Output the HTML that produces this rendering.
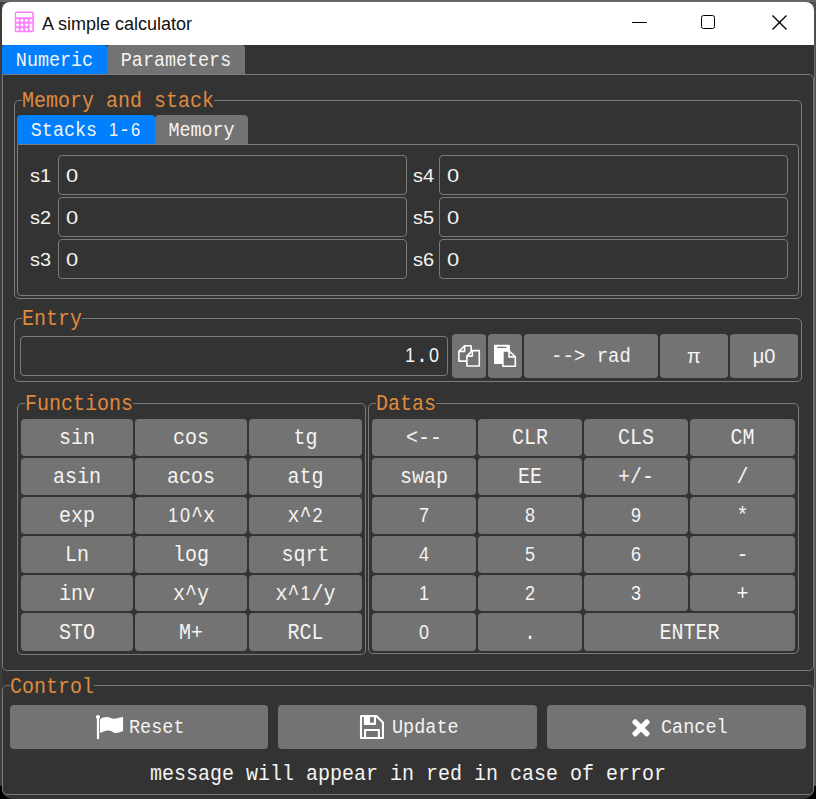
<!DOCTYPE html><html><head><meta charset="utf-8"><style>html,body{margin:0;padding:0;}body{width:816px;height:799px;position:relative;overflow:hidden;background:#4a4a4a;}</style></head><body>
<div style="position:absolute;left:0px;top:0px;width:2px;height:799px;background:#3c3c3c;"></div>
<div style="position:absolute;left:814px;top:0px;width:2px;height:799px;background:#4a5058;"></div>
<div style="position:absolute;left:814px;top:45px;width:1px;height:741px;background:#6a6a6a;"></div>
<div style="position:absolute;left:0px;top:0px;width:816px;height:2px;background:#6a6560;"></div>
<div style="position:absolute;left:0px;top:786px;width:14px;height:13px;background:#000;"></div>
<div style="position:absolute;left:802px;top:786px;width:14px;height:13px;background:#000;"></div>
<div style="position:absolute;left:2px;top:2px;width:812px;height:797px;background:#333333;border-radius:8px 8px 10px 10px;"></div>
<div style="position:absolute;left:2px;top:2px;width:812px;height:43px;background:#ffffff;border-radius:8px 8px 0 0;"></div>
<svg style="position:absolute;left:10px;top:8px" width="30" height="28" viewBox="10 8 30 28">
<path fill="#ff80ff" fill-rule="evenodd" d="M16.3 11.5 H32.4 Q33.9 11.5 33.9 13 V30.8 Q33.9 32.3 32.4 32.3 H16.3 Q14.8 32.3 14.8 30.8 V13 Q14.8 11.5 16.3 11.5 Z
M16.1 13 V17.2 H32.2 V13 Z
M17.5 19 a1.5 1.5 0 1 0 0.01 0 Z M21.9 19 a1.5 1.5 0 1 0 0.01 0 Z M26.5 19 a1.5 1.5 0 1 0 0.01 0 Z M31 19 a1.5 1.5 0 1 0 0.01 0 Z
M17.5 23.4 a1.5 1.5 0 1 0 0.01 0 Z M21.9 23.4 a1.5 1.5 0 1 0 0.01 0 Z M26.5 23.4 a1.5 1.5 0 1 0 0.01 0 Z
M17.5 28 a1.5 1.5 0 1 0 0.01 0 Z M21.9 28 a1.5 1.5 0 1 0 0.01 0 Z M26.5 28 a1.5 1.5 0 1 0 0.01 0 Z
M29.6 24.9 Q29.6 23.6 30.95 23.6 Q32.3 23.6 32.3 24.9 V29.5 Q32.3 30.8 30.95 30.8 Q29.6 30.8 29.6 29.5 Z"/>
</svg>
<div style="position:absolute;left:42.00px;top:13.91px;width:300px;height:20.11px;line-height:20.11px;font-family:'Liberation Sans', sans-serif;font-size:18.00px;color:#111111;text-align:left;white-space:pre;">A simple calculator</div>
<div style="position:absolute;left:632px;top:22px;width:15px;height:1.1999999999999993px;background:#000;"></div>
<div style="position:absolute;left:701px;top:15px;width:12.4px;height:12.4px;border:1.4px solid #000;border-radius:2.5px;"></div>
<svg style="position:absolute;left:771px;top:14px" width="17" height="17" viewBox="0 0 17 17"><path d="M1.5 1.5 L15.5 15.5 M15.5 1.5 L1.5 15.5" stroke="#000" stroke-width="1.35"/></svg>
<div style="position:absolute;left:2px;top:74px;width:810px;height:595px;border:1px solid #7a7a7a;border-radius:0 5px 5px 5px;"></div>
<div style="position:absolute;left:2px;top:45px;width:105px;height:29px;background:#007fff;border-radius:3px 3px 0 0;"></div>
<div style="position:absolute;left:107px;top:45px;width:138px;height:29px;background:#737373;border-radius:3px 3px 0 0;"></div>
<div style="position:absolute;left:1.50px;top:49.76px;width:105px;height:22.51px;line-height:22.51px;font-family:'Liberation Mono', monospace;font-size:19.87px;color:#f6f4f2;text-align:center;white-space:pre;transform:scaleX(0.9259);transform-origin:center top;">Numeric</div>
<div style="position:absolute;left:107.00px;top:49.76px;width:138px;height:22.51px;line-height:22.51px;font-family:'Liberation Mono', monospace;font-size:19.87px;color:#f6f4f2;text-align:center;white-space:pre;transform:scaleX(0.9259);transform-origin:center top;">Parameters</div>
<div style="position:absolute;left:14px;top:100px;width:786px;height:197px;border:1px solid #7a7a7a;border-radius:5px;"></div>
<div style="position:absolute;left:22px;top:99px;width:192px;height:3px;background:#333333;"></div>
<div style="position:absolute;left:22.00px;top:89.02px;width:400px;height:24.46px;line-height:24.46px;font-family:'Liberation Mono', monospace;font-size:21.60px;color:#e08a3e;text-align:left;white-space:pre;transform:scaleX(0.9259);transform-origin:left top;">Memory and stack</div>
<div style="position:absolute;left:17px;top:144px;width:780px;height:150px;border:1px solid #7a7a7a;border-radius:0 4px 4px 4px;"></div>
<div style="position:absolute;left:17px;top:115px;width:138px;height:29px;background:#007fff;border-radius:4px 4px 0 0;"></div>
<div style="position:absolute;left:155px;top:115px;width:93px;height:29px;background:#737373;border-radius:4px 4px 0 0;"></div>
<div style="position:absolute;left:17.00px;top:119.66px;width:138px;height:22.51px;line-height:22.51px;font-family:'Liberation Mono', monospace;font-size:19.87px;color:#f6f4f2;text-align:center;white-space:pre;transform:scaleX(0.9259);transform-origin:center top;">Stacks <span style="font-family:'Liberation Sans', sans-serif;font-size:17.88px;line-height:0;padding:0 0.990px;">1</span>-<span style="font-family:'Liberation Sans', sans-serif;font-size:17.88px;line-height:0;padding:0 0.990px;">6</span></div>
<div style="position:absolute;left:155.00px;top:119.66px;width:93px;height:22.51px;line-height:22.51px;font-family:'Liberation Mono', monospace;font-size:19.87px;color:#f6f4f2;text-align:center;white-space:pre;transform:scaleX(0.9259);transform-origin:center top;">Memory</div>
<div style="position:absolute;left:58px;top:155px;width:347px;height:38px;border:1px solid #7a7a7a;border-radius:4px;"></div>
<div style="position:absolute;left:439px;top:155px;width:347px;height:38px;border:1px solid #7a7a7a;border-radius:4px;"></div>
<div style="position:absolute;left:30.00px;top:164.81px;width:30px;height:21.22px;line-height:21.22px;font-family:'Liberation Sans', sans-serif;font-size:19.00px;color:#f6f4f2;text-align:left;white-space:pre;transform:scaleX(1.0500);transform-origin:left top;">s1</div>
<div style="position:absolute;left:412.50px;top:164.81px;width:30px;height:21.22px;line-height:21.22px;font-family:'Liberation Sans', sans-serif;font-size:19.00px;color:#f6f4f2;text-align:left;white-space:pre;transform:scaleX(1.0500);transform-origin:left top;">s4</div>
<div style="position:absolute;left:65.50px;top:164.81px;width:30px;height:21.22px;line-height:21.22px;font-family:'Liberation Sans', sans-serif;font-size:19.00px;color:#f6f4f2;text-align:left;white-space:pre;transform:scaleX(1.1500);transform-origin:left top;">0</div>
<div style="position:absolute;left:447.00px;top:164.81px;width:30px;height:21.22px;line-height:21.22px;font-family:'Liberation Sans', sans-serif;font-size:19.00px;color:#f6f4f2;text-align:left;white-space:pre;transform:scaleX(1.1500);transform-origin:left top;">0</div>
<div style="position:absolute;left:58px;top:197px;width:347px;height:38px;border:1px solid #7a7a7a;border-radius:4px;"></div>
<div style="position:absolute;left:439px;top:197px;width:347px;height:38px;border:1px solid #7a7a7a;border-radius:4px;"></div>
<div style="position:absolute;left:30.00px;top:206.81px;width:30px;height:21.22px;line-height:21.22px;font-family:'Liberation Sans', sans-serif;font-size:19.00px;color:#f6f4f2;text-align:left;white-space:pre;transform:scaleX(1.0500);transform-origin:left top;">s2</div>
<div style="position:absolute;left:412.50px;top:206.81px;width:30px;height:21.22px;line-height:21.22px;font-family:'Liberation Sans', sans-serif;font-size:19.00px;color:#f6f4f2;text-align:left;white-space:pre;transform:scaleX(1.0500);transform-origin:left top;">s5</div>
<div style="position:absolute;left:65.50px;top:206.81px;width:30px;height:21.22px;line-height:21.22px;font-family:'Liberation Sans', sans-serif;font-size:19.00px;color:#f6f4f2;text-align:left;white-space:pre;transform:scaleX(1.1500);transform-origin:left top;">0</div>
<div style="position:absolute;left:447.00px;top:206.81px;width:30px;height:21.22px;line-height:21.22px;font-family:'Liberation Sans', sans-serif;font-size:19.00px;color:#f6f4f2;text-align:left;white-space:pre;transform:scaleX(1.1500);transform-origin:left top;">0</div>
<div style="position:absolute;left:58px;top:239px;width:347px;height:38px;border:1px solid #7a7a7a;border-radius:4px;"></div>
<div style="position:absolute;left:439px;top:239px;width:347px;height:38px;border:1px solid #7a7a7a;border-radius:4px;"></div>
<div style="position:absolute;left:30.00px;top:248.81px;width:30px;height:21.22px;line-height:21.22px;font-family:'Liberation Sans', sans-serif;font-size:19.00px;color:#f6f4f2;text-align:left;white-space:pre;transform:scaleX(1.0500);transform-origin:left top;">s3</div>
<div style="position:absolute;left:412.50px;top:248.81px;width:30px;height:21.22px;line-height:21.22px;font-family:'Liberation Sans', sans-serif;font-size:19.00px;color:#f6f4f2;text-align:left;white-space:pre;transform:scaleX(1.0500);transform-origin:left top;">s6</div>
<div style="position:absolute;left:65.50px;top:248.81px;width:30px;height:21.22px;line-height:21.22px;font-family:'Liberation Sans', sans-serif;font-size:19.00px;color:#f6f4f2;text-align:left;white-space:pre;transform:scaleX(1.1500);transform-origin:left top;">0</div>
<div style="position:absolute;left:447.00px;top:248.81px;width:30px;height:21.22px;line-height:21.22px;font-family:'Liberation Sans', sans-serif;font-size:19.00px;color:#f6f4f2;text-align:left;white-space:pre;transform:scaleX(1.1500);transform-origin:left top;">0</div>
<div style="position:absolute;left:14px;top:318px;width:786px;height:62px;border:1px solid #7a7a7a;border-radius:5px;"></div>
<div style="position:absolute;left:22px;top:317px;width:60px;height:3px;background:#333333;"></div>
<div style="position:absolute;left:22.00px;top:307.22px;width:400px;height:24.46px;line-height:24.46px;font-family:'Liberation Mono', monospace;font-size:21.60px;color:#e08a3e;text-align:left;white-space:pre;transform:scaleX(0.9259);transform-origin:left top;">Entry</div>
<div style="position:absolute;left:20px;top:336px;width:426px;height:38px;border:1px solid #7a7a7a;border-radius:4px;"></div>
<div style="position:absolute;left:240.00px;top:344.02px;width:200px;height:24.46px;line-height:24.46px;font-family:'Liberation Mono', monospace;font-size:21.60px;color:#f6f4f2;text-align:right;white-space:pre;transform:scaleX(0.9259);transform-origin:right top;"><span style="font-family:'Liberation Sans', sans-serif;font-size:19.44px;line-height:0;padding:0 1.076px;">1</span>.<span style="font-family:'Liberation Sans', sans-serif;font-size:19.44px;line-height:0;padding:0 1.076px;">0</span></div>
<div style="position:absolute;left:452px;top:334px;width:34px;height:44px;background:#737373;border-radius:4px;"></div>
<div style="position:absolute;left:488px;top:334px;width:34px;height:44px;background:#737373;border-radius:4px;"></div>
<svg style="position:absolute;left:455px;top:342px" width="28" height="28" viewBox="0 0 28 28">
<path d="M3.9 9.4 L9.6 3.7 L16.1 3.7 L16.1 19.1 L3.9 19.1 Z" fill="none" stroke="#fff" stroke-width="1.6" stroke-linejoin="round"/>
<path d="M3.9 9.4 L9.6 9.4 L9.6 3.7" fill="none" stroke="#fff" stroke-width="1.6" stroke-linejoin="round"/>
<path d="M11.9 14.1 L17.3 8.6 L24.3 8.6 L24.3 24 L11.9 24 Z" fill="#737373" stroke="#fff" stroke-width="1.6" stroke-linejoin="round"/>
<path d="M11.9 14.1 L17.3 14.1 L17.3 8.6" fill="none" stroke="#fff" stroke-width="1.6" stroke-linejoin="round"/>
</svg>
<svg style="position:absolute;left:491px;top:342px" width="28" height="28" viewBox="0 0 28 28">
<rect x="3" y="2.8" width="15.9" height="19.1" rx="1" fill="#fff"/>
<rect x="6.1" y="4.8" width="9.5" height="1.3" rx="0.6" fill="#737373"/>
<path d="M11.9 8.9 L18 8.9 L24.3 14.9 L24.3 24.2 L11.9 24.2 Z" fill="#737373" stroke="#fff" stroke-width="1.6" stroke-linejoin="round"/>
<path d="M18 8.9 L18 14.9 L24.3 14.9" fill="none" stroke="#fff" stroke-width="1.6" stroke-linejoin="round"/>
</svg>
<div style="position:absolute;left:524px;top:334px;width:134px;height:44px;background:#737373;border-radius:4px;"></div>
<div style="position:absolute;left:524.00px;top:344.92px;width:134px;height:23.24px;line-height:23.24px;font-family:'Liberation Mono', monospace;font-size:20.52px;color:#f6f4f2;text-align:center;white-space:pre;transform:scaleX(0.9259);transform-origin:center top;">--&gt; rad</div>
<div style="position:absolute;left:660px;top:334px;width:68px;height:44px;background:#737373;border-radius:4px;"></div>
<div style="position:absolute;left:660.00px;top:345.35px;width:68px;height:22.65px;line-height:22.65px;font-family:'Liberation Sans', sans-serif;font-size:20.00px;color:#f6f4f2;text-align:center;white-space:pre;">π</div>
<div style="position:absolute;left:730px;top:334px;width:68px;height:44px;background:#737373;border-radius:4px;"></div>
<div style="position:absolute;left:730.00px;top:345.35px;width:68px;height:22.65px;line-height:22.65px;font-family:'Liberation Sans', sans-serif;font-size:20.00px;color:#f6f4f2;text-align:center;white-space:pre;">μ0</div>
<div style="position:absolute;left:17px;top:403px;width:347px;height:250px;border:1px solid #7a7a7a;border-radius:5px;"></div>
<div style="position:absolute;left:25px;top:402px;width:108px;height:3px;background:#333333;"></div>
<div style="position:absolute;left:25.00px;top:392.22px;width:400px;height:24.46px;line-height:24.46px;font-family:'Liberation Mono', monospace;font-size:21.60px;color:#e08a3e;text-align:left;white-space:pre;transform:scaleX(0.9259);transform-origin:left top;">Functions</div>
<div style="position:absolute;left:368px;top:403px;width:429px;height:249px;border:1px solid #7a7a7a;border-radius:5px;"></div>
<div style="position:absolute;left:376px;top:402px;width:60px;height:3px;background:#333333;"></div>
<div style="position:absolute;left:376.00px;top:392.22px;width:400px;height:24.46px;line-height:24.46px;font-family:'Liberation Mono', monospace;font-size:21.60px;color:#e08a3e;text-align:left;white-space:pre;transform:scaleX(0.9259);transform-origin:left top;">Datas</div>
<div style="position:absolute;left:21px;top:419px;width:112px;height:37px;background:#737373;border-radius:4px;"></div>
<div style="position:absolute;left:21.00px;top:426.02px;width:112px;height:24.46px;line-height:24.46px;font-family:'Liberation Mono', monospace;font-size:21.60px;color:#f6f4f2;text-align:center;white-space:pre;transform:scaleX(0.9259);transform-origin:center top;">sin</div>
<div style="position:absolute;left:135px;top:419px;width:112px;height:37px;background:#737373;border-radius:4px;"></div>
<div style="position:absolute;left:135.00px;top:426.02px;width:112px;height:24.46px;line-height:24.46px;font-family:'Liberation Mono', monospace;font-size:21.60px;color:#f6f4f2;text-align:center;white-space:pre;transform:scaleX(0.9259);transform-origin:center top;">cos</div>
<div style="position:absolute;left:249px;top:419px;width:113px;height:37px;background:#737373;border-radius:4px;"></div>
<div style="position:absolute;left:249.00px;top:426.02px;width:113px;height:24.46px;line-height:24.46px;font-family:'Liberation Mono', monospace;font-size:21.60px;color:#f6f4f2;text-align:center;white-space:pre;transform:scaleX(0.9259);transform-origin:center top;">tg</div>
<div style="position:absolute;left:21px;top:458px;width:112px;height:37px;background:#737373;border-radius:4px;"></div>
<div style="position:absolute;left:21.00px;top:465.02px;width:112px;height:24.46px;line-height:24.46px;font-family:'Liberation Mono', monospace;font-size:21.60px;color:#f6f4f2;text-align:center;white-space:pre;transform:scaleX(0.9259);transform-origin:center top;">asin</div>
<div style="position:absolute;left:135px;top:458px;width:112px;height:37px;background:#737373;border-radius:4px;"></div>
<div style="position:absolute;left:135.00px;top:465.02px;width:112px;height:24.46px;line-height:24.46px;font-family:'Liberation Mono', monospace;font-size:21.60px;color:#f6f4f2;text-align:center;white-space:pre;transform:scaleX(0.9259);transform-origin:center top;">acos</div>
<div style="position:absolute;left:249px;top:458px;width:113px;height:37px;background:#737373;border-radius:4px;"></div>
<div style="position:absolute;left:249.00px;top:465.02px;width:113px;height:24.46px;line-height:24.46px;font-family:'Liberation Mono', monospace;font-size:21.60px;color:#f6f4f2;text-align:center;white-space:pre;transform:scaleX(0.9259);transform-origin:center top;">atg</div>
<div style="position:absolute;left:21px;top:497px;width:112px;height:37px;background:#737373;border-radius:4px;"></div>
<div style="position:absolute;left:21.00px;top:504.02px;width:112px;height:24.46px;line-height:24.46px;font-family:'Liberation Mono', monospace;font-size:21.60px;color:#f6f4f2;text-align:center;white-space:pre;transform:scaleX(0.9259);transform-origin:center top;">exp</div>
<div style="position:absolute;left:135px;top:497px;width:112px;height:37px;background:#737373;border-radius:4px;"></div>
<div style="position:absolute;left:135.00px;top:504.02px;width:112px;height:24.46px;line-height:24.46px;font-family:'Liberation Mono', monospace;font-size:21.60px;color:#f6f4f2;text-align:center;white-space:pre;transform:scaleX(0.9259);transform-origin:center top;"><span style="font-family:'Liberation Sans', sans-serif;font-size:19.44px;line-height:0;padding:0 1.076px;">1</span><span style="font-family:'Liberation Sans', sans-serif;font-size:19.44px;line-height:0;padding:0 1.076px;">0</span>^x</div>
<div style="position:absolute;left:249px;top:497px;width:113px;height:37px;background:#737373;border-radius:4px;"></div>
<div style="position:absolute;left:249.00px;top:504.02px;width:113px;height:24.46px;line-height:24.46px;font-family:'Liberation Mono', monospace;font-size:21.60px;color:#f6f4f2;text-align:center;white-space:pre;transform:scaleX(0.9259);transform-origin:center top;">x^<span style="font-family:'Liberation Sans', sans-serif;font-size:19.44px;line-height:0;padding:0 1.076px;">2</span></div>
<div style="position:absolute;left:21px;top:536px;width:112px;height:37px;background:#737373;border-radius:4px;"></div>
<div style="position:absolute;left:21.00px;top:543.02px;width:112px;height:24.46px;line-height:24.46px;font-family:'Liberation Mono', monospace;font-size:21.60px;color:#f6f4f2;text-align:center;white-space:pre;transform:scaleX(0.9259);transform-origin:center top;">Ln</div>
<div style="position:absolute;left:135px;top:536px;width:112px;height:37px;background:#737373;border-radius:4px;"></div>
<div style="position:absolute;left:135.00px;top:543.02px;width:112px;height:24.46px;line-height:24.46px;font-family:'Liberation Mono', monospace;font-size:21.60px;color:#f6f4f2;text-align:center;white-space:pre;transform:scaleX(0.9259);transform-origin:center top;">log</div>
<div style="position:absolute;left:249px;top:536px;width:113px;height:37px;background:#737373;border-radius:4px;"></div>
<div style="position:absolute;left:249.00px;top:543.02px;width:113px;height:24.46px;line-height:24.46px;font-family:'Liberation Mono', monospace;font-size:21.60px;color:#f6f4f2;text-align:center;white-space:pre;transform:scaleX(0.9259);transform-origin:center top;">sqrt</div>
<div style="position:absolute;left:21px;top:575px;width:112px;height:36px;background:#737373;border-radius:4px;"></div>
<div style="position:absolute;left:21.00px;top:582.02px;width:112px;height:24.46px;line-height:24.46px;font-family:'Liberation Mono', monospace;font-size:21.60px;color:#f6f4f2;text-align:center;white-space:pre;transform:scaleX(0.9259);transform-origin:center top;">inv</div>
<div style="position:absolute;left:135px;top:575px;width:112px;height:36px;background:#737373;border-radius:4px;"></div>
<div style="position:absolute;left:135.00px;top:582.02px;width:112px;height:24.46px;line-height:24.46px;font-family:'Liberation Mono', monospace;font-size:21.60px;color:#f6f4f2;text-align:center;white-space:pre;transform:scaleX(0.9259);transform-origin:center top;">x^y</div>
<div style="position:absolute;left:249px;top:575px;width:113px;height:36px;background:#737373;border-radius:4px;"></div>
<div style="position:absolute;left:249.00px;top:582.02px;width:113px;height:24.46px;line-height:24.46px;font-family:'Liberation Mono', monospace;font-size:21.60px;color:#f6f4f2;text-align:center;white-space:pre;transform:scaleX(0.9259);transform-origin:center top;">x^<span style="font-family:'Liberation Sans', sans-serif;font-size:19.44px;line-height:0;padding:0 1.076px;">1</span>/y</div>
<div style="position:absolute;left:21px;top:613px;width:112px;height:38px;background:#737373;border-radius:4px;"></div>
<div style="position:absolute;left:21.00px;top:620.82px;width:112px;height:24.46px;line-height:24.46px;font-family:'Liberation Mono', monospace;font-size:21.60px;color:#f6f4f2;text-align:center;white-space:pre;transform:scaleX(0.9259);transform-origin:center top;">STO</div>
<div style="position:absolute;left:135px;top:613px;width:112px;height:38px;background:#737373;border-radius:4px;"></div>
<div style="position:absolute;left:135.00px;top:620.82px;width:112px;height:24.46px;line-height:24.46px;font-family:'Liberation Mono', monospace;font-size:21.60px;color:#f6f4f2;text-align:center;white-space:pre;transform:scaleX(0.9259);transform-origin:center top;">M+</div>
<div style="position:absolute;left:249px;top:613px;width:113px;height:38px;background:#737373;border-radius:4px;"></div>
<div style="position:absolute;left:249.00px;top:620.82px;width:113px;height:24.46px;line-height:24.46px;font-family:'Liberation Mono', monospace;font-size:21.60px;color:#f6f4f2;text-align:center;white-space:pre;transform:scaleX(0.9259);transform-origin:center top;">RCL</div>
<div style="position:absolute;left:372px;top:419px;width:104px;height:37px;background:#737373;border-radius:4px;"></div>
<div style="position:absolute;left:372.00px;top:426.02px;width:104px;height:24.46px;line-height:24.46px;font-family:'Liberation Mono', monospace;font-size:21.60px;color:#f6f4f2;text-align:center;white-space:pre;transform:scaleX(0.9259);transform-origin:center top;">&lt;--</div>
<div style="position:absolute;left:478px;top:419px;width:104px;height:37px;background:#737373;border-radius:4px;"></div>
<div style="position:absolute;left:478.00px;top:426.02px;width:104px;height:24.46px;line-height:24.46px;font-family:'Liberation Mono', monospace;font-size:21.60px;color:#f6f4f2;text-align:center;white-space:pre;transform:scaleX(0.9259);transform-origin:center top;">CLR</div>
<div style="position:absolute;left:584px;top:419px;width:104px;height:37px;background:#737373;border-radius:4px;"></div>
<div style="position:absolute;left:584.00px;top:426.02px;width:104px;height:24.46px;line-height:24.46px;font-family:'Liberation Mono', monospace;font-size:21.60px;color:#f6f4f2;text-align:center;white-space:pre;transform:scaleX(0.9259);transform-origin:center top;">CLS</div>
<div style="position:absolute;left:690px;top:419px;width:105px;height:37px;background:#737373;border-radius:4px;"></div>
<div style="position:absolute;left:690.00px;top:426.02px;width:105px;height:24.46px;line-height:24.46px;font-family:'Liberation Mono', monospace;font-size:21.60px;color:#f6f4f2;text-align:center;white-space:pre;transform:scaleX(0.9259);transform-origin:center top;">CM</div>
<div style="position:absolute;left:372px;top:458px;width:104px;height:37px;background:#737373;border-radius:4px;"></div>
<div style="position:absolute;left:372.00px;top:465.02px;width:104px;height:24.46px;line-height:24.46px;font-family:'Liberation Mono', monospace;font-size:21.60px;color:#f6f4f2;text-align:center;white-space:pre;transform:scaleX(0.9259);transform-origin:center top;">swap</div>
<div style="position:absolute;left:478px;top:458px;width:104px;height:37px;background:#737373;border-radius:4px;"></div>
<div style="position:absolute;left:478.00px;top:465.02px;width:104px;height:24.46px;line-height:24.46px;font-family:'Liberation Mono', monospace;font-size:21.60px;color:#f6f4f2;text-align:center;white-space:pre;transform:scaleX(0.9259);transform-origin:center top;">EE</div>
<div style="position:absolute;left:584px;top:458px;width:104px;height:37px;background:#737373;border-radius:4px;"></div>
<div style="position:absolute;left:584.00px;top:465.02px;width:104px;height:24.46px;line-height:24.46px;font-family:'Liberation Mono', monospace;font-size:21.60px;color:#f6f4f2;text-align:center;white-space:pre;transform:scaleX(0.9259);transform-origin:center top;">+/-</div>
<div style="position:absolute;left:690px;top:458px;width:105px;height:37px;background:#737373;border-radius:4px;"></div>
<div style="position:absolute;left:690.00px;top:465.02px;width:105px;height:24.46px;line-height:24.46px;font-family:'Liberation Mono', monospace;font-size:21.60px;color:#f6f4f2;text-align:center;white-space:pre;transform:scaleX(0.9259);transform-origin:center top;">/</div>
<div style="position:absolute;left:372px;top:497px;width:104px;height:37px;background:#737373;border-radius:4px;"></div>
<div style="position:absolute;left:372.00px;top:504.02px;width:104px;height:24.46px;line-height:24.46px;font-family:'Liberation Mono', monospace;font-size:21.60px;color:#f6f4f2;text-align:center;white-space:pre;transform:scaleX(0.9259);transform-origin:center top;"><span style="font-family:'Liberation Sans', sans-serif;font-size:19.44px;line-height:0;padding:0 1.076px;">7</span></div>
<div style="position:absolute;left:478px;top:497px;width:104px;height:37px;background:#737373;border-radius:4px;"></div>
<div style="position:absolute;left:478.00px;top:504.02px;width:104px;height:24.46px;line-height:24.46px;font-family:'Liberation Mono', monospace;font-size:21.60px;color:#f6f4f2;text-align:center;white-space:pre;transform:scaleX(0.9259);transform-origin:center top;"><span style="font-family:'Liberation Sans', sans-serif;font-size:19.44px;line-height:0;padding:0 1.076px;">8</span></div>
<div style="position:absolute;left:584px;top:497px;width:104px;height:37px;background:#737373;border-radius:4px;"></div>
<div style="position:absolute;left:584.00px;top:504.02px;width:104px;height:24.46px;line-height:24.46px;font-family:'Liberation Mono', monospace;font-size:21.60px;color:#f6f4f2;text-align:center;white-space:pre;transform:scaleX(0.9259);transform-origin:center top;"><span style="font-family:'Liberation Sans', sans-serif;font-size:19.44px;line-height:0;padding:0 1.076px;">9</span></div>
<div style="position:absolute;left:690px;top:497px;width:105px;height:37px;background:#737373;border-radius:4px;"></div>
<div style="position:absolute;left:690.00px;top:504.02px;width:105px;height:24.46px;line-height:24.46px;font-family:'Liberation Mono', monospace;font-size:21.60px;color:#f6f4f2;text-align:center;white-space:pre;transform:scaleX(0.9259);transform-origin:center top;">*</div>
<div style="position:absolute;left:372px;top:536px;width:104px;height:37px;background:#737373;border-radius:4px;"></div>
<div style="position:absolute;left:372.00px;top:543.02px;width:104px;height:24.46px;line-height:24.46px;font-family:'Liberation Mono', monospace;font-size:21.60px;color:#f6f4f2;text-align:center;white-space:pre;transform:scaleX(0.9259);transform-origin:center top;"><span style="font-family:'Liberation Sans', sans-serif;font-size:19.44px;line-height:0;padding:0 1.076px;">4</span></div>
<div style="position:absolute;left:478px;top:536px;width:104px;height:37px;background:#737373;border-radius:4px;"></div>
<div style="position:absolute;left:478.00px;top:543.02px;width:104px;height:24.46px;line-height:24.46px;font-family:'Liberation Mono', monospace;font-size:21.60px;color:#f6f4f2;text-align:center;white-space:pre;transform:scaleX(0.9259);transform-origin:center top;"><span style="font-family:'Liberation Sans', sans-serif;font-size:19.44px;line-height:0;padding:0 1.076px;">5</span></div>
<div style="position:absolute;left:584px;top:536px;width:104px;height:37px;background:#737373;border-radius:4px;"></div>
<div style="position:absolute;left:584.00px;top:543.02px;width:104px;height:24.46px;line-height:24.46px;font-family:'Liberation Mono', monospace;font-size:21.60px;color:#f6f4f2;text-align:center;white-space:pre;transform:scaleX(0.9259);transform-origin:center top;"><span style="font-family:'Liberation Sans', sans-serif;font-size:19.44px;line-height:0;padding:0 1.076px;">6</span></div>
<div style="position:absolute;left:690px;top:536px;width:105px;height:37px;background:#737373;border-radius:4px;"></div>
<div style="position:absolute;left:690.00px;top:543.02px;width:105px;height:24.46px;line-height:24.46px;font-family:'Liberation Mono', monospace;font-size:21.60px;color:#f6f4f2;text-align:center;white-space:pre;transform:scaleX(0.9259);transform-origin:center top;">-</div>
<div style="position:absolute;left:372px;top:575px;width:104px;height:36px;background:#737373;border-radius:4px;"></div>
<div style="position:absolute;left:372.00px;top:582.02px;width:104px;height:24.46px;line-height:24.46px;font-family:'Liberation Mono', monospace;font-size:21.60px;color:#f6f4f2;text-align:center;white-space:pre;transform:scaleX(0.9259);transform-origin:center top;"><span style="font-family:'Liberation Sans', sans-serif;font-size:19.44px;line-height:0;padding:0 1.076px;">1</span></div>
<div style="position:absolute;left:478px;top:575px;width:104px;height:36px;background:#737373;border-radius:4px;"></div>
<div style="position:absolute;left:478.00px;top:582.02px;width:104px;height:24.46px;line-height:24.46px;font-family:'Liberation Mono', monospace;font-size:21.60px;color:#f6f4f2;text-align:center;white-space:pre;transform:scaleX(0.9259);transform-origin:center top;"><span style="font-family:'Liberation Sans', sans-serif;font-size:19.44px;line-height:0;padding:0 1.076px;">2</span></div>
<div style="position:absolute;left:584px;top:575px;width:104px;height:36px;background:#737373;border-radius:4px;"></div>
<div style="position:absolute;left:584.00px;top:582.02px;width:104px;height:24.46px;line-height:24.46px;font-family:'Liberation Mono', monospace;font-size:21.60px;color:#f6f4f2;text-align:center;white-space:pre;transform:scaleX(0.9259);transform-origin:center top;"><span style="font-family:'Liberation Sans', sans-serif;font-size:19.44px;line-height:0;padding:0 1.076px;">3</span></div>
<div style="position:absolute;left:690px;top:575px;width:105px;height:36px;background:#737373;border-radius:4px;"></div>
<div style="position:absolute;left:690.00px;top:582.02px;width:105px;height:24.46px;line-height:24.46px;font-family:'Liberation Mono', monospace;font-size:21.60px;color:#f6f4f2;text-align:center;white-space:pre;transform:scaleX(0.9259);transform-origin:center top;">+</div>
<div style="position:absolute;left:372px;top:613px;width:104px;height:38px;background:#737373;border-radius:4px;"></div>
<div style="position:absolute;left:372.00px;top:620.82px;width:104px;height:24.46px;line-height:24.46px;font-family:'Liberation Mono', monospace;font-size:21.60px;color:#f6f4f2;text-align:center;white-space:pre;transform:scaleX(0.9259);transform-origin:center top;"><span style="font-family:'Liberation Sans', sans-serif;font-size:19.44px;line-height:0;padding:0 1.076px;">0</span></div>
<div style="position:absolute;left:478px;top:613px;width:104px;height:38px;background:#737373;border-radius:4px;"></div>
<div style="position:absolute;left:478.00px;top:620.82px;width:104px;height:24.46px;line-height:24.46px;font-family:'Liberation Mono', monospace;font-size:21.60px;color:#f6f4f2;text-align:center;white-space:pre;transform:scaleX(0.9259);transform-origin:center top;">.</div>
<div style="position:absolute;left:584px;top:613px;width:211px;height:38px;background:#737373;border-radius:4px;"></div>
<div style="position:absolute;left:584.00px;top:620.82px;width:211px;height:24.46px;line-height:24.46px;font-family:'Liberation Mono', monospace;font-size:21.60px;color:#f6f4f2;text-align:center;white-space:pre;transform:scaleX(0.9259);transform-origin:center top;">ENTER</div>
<div style="position:absolute;left:2px;top:685px;width:810px;height:108px;border:1px solid #7a7a7a;border-radius:5px;"></div>
<div style="position:absolute;left:10px;top:684px;width:84px;height:3px;background:#333333;"></div>
<div style="position:absolute;left:10.00px;top:674.52px;width:400px;height:24.46px;line-height:24.46px;font-family:'Liberation Mono', monospace;font-size:21.60px;color:#e08a3e;text-align:left;white-space:pre;transform:scaleX(0.9259);transform-origin:left top;">Control</div>
<div style="position:absolute;left:10px;top:705px;width:258px;height:44px;background:#737373;border-radius:4px;"></div>
<div style="position:absolute;left:278px;top:705px;width:259px;height:44px;background:#737373;border-radius:4px;"></div>
<div style="position:absolute;left:547px;top:705px;width:259px;height:44px;background:#737373;border-radius:4px;"></div>
<div style="position:absolute;left:128.50px;top:717.07px;width:100px;height:22.63px;line-height:22.63px;font-family:'Liberation Mono', monospace;font-size:19.98px;color:#f6f4f2;text-align:left;white-space:pre;transform:scaleX(0.9259);transform-origin:left top;">Reset</div>
<div style="position:absolute;left:391.50px;top:717.07px;width:100px;height:22.63px;line-height:22.63px;font-family:'Liberation Mono', monospace;font-size:19.98px;color:#f6f4f2;text-align:left;white-space:pre;transform:scaleX(0.9259);transform-origin:left top;">Update</div>
<div style="position:absolute;left:660.50px;top:717.07px;width:100px;height:22.63px;line-height:22.63px;font-family:'Liberation Mono', monospace;font-size:19.98px;color:#f6f4f2;text-align:left;white-space:pre;transform:scaleX(0.9259);transform-origin:left top;">Cancel</div>
<svg style="position:absolute;left:92px;top:712px" width="35" height="30" viewBox="0 0 35 30">
<rect x="4.9" y="5" width="2.2" height="22" fill="#fff"/>
<circle cx="6" cy="4.9" r="2" fill="#fff"/>
<path d="M7.9 7.4 C11 5.2 14 4.6 17 5.4 C20 6.2 21.5 7 24 6.6 C27 6.1 29 5.2 31.1 4.8 L31.1 18.9 C29 19.5 27 21 24 21 C21 21 20 18.5 16.5 18.4 C13 18.3 10.5 20 7.9 21 Z" fill="#fff"/>
</svg>
<svg style="position:absolute;left:352px;top:712px" width="35" height="30" viewBox="0 0 35 30">
<path d="M9 4.05 L24.4 4.05 L30.95 10.4 L30.95 25.95 L9 25.95 Z" fill="none" stroke="#fff" stroke-width="2.1" stroke-linejoin="round"/>
<path d="M11.8 4 L24 4 L24 11.9 Q24 12.9 23 12.9 L12.8 12.9 Q11.8 12.9 11.8 11.9 Z" fill="#fff"/>
<rect x="18" y="5.1" width="3.9" height="5.6" fill="#737373"/>
<path d="M13.05 26 L13.05 18 L26.85 18 L26.85 26" fill="none" stroke="#fff" stroke-width="2.1"/>
</svg>
<svg style="position:absolute;left:626px;top:712px" width="30" height="30" viewBox="0 0 30 30">
<g fill="#fff" transform="translate(15 15.85)"><rect x="-10.75" y="-2.65" width="21.5" height="5.3" rx="1.8" transform="rotate(45)"/><rect x="-10.75" y="-2.65" width="21.5" height="5.3" rx="1.8" transform="rotate(-45)"/></g>
</svg>
<div style="position:absolute;left:108.00px;top:762.02px;width:600px;height:24.46px;line-height:24.46px;font-family:'Liberation Mono', monospace;font-size:21.60px;color:#f6f4f2;text-align:center;white-space:pre;transform:scaleX(0.9259);transform-origin:center top;">message will appear in red in case of error</div>
</body></html>
